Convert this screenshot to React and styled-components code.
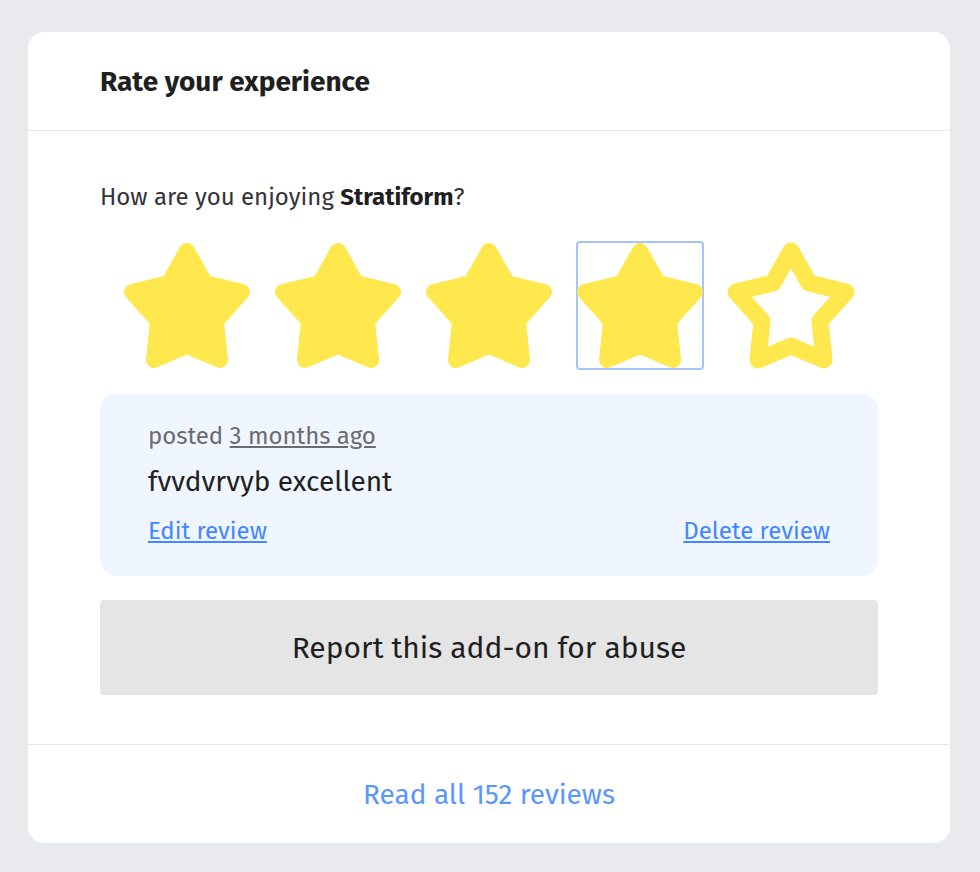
import styled, { createGlobalStyle } from "styled-components";

const GlobalStyle = createGlobalStyle`
  html, body {
    margin: 0;
    background: #e9eaee;
  }
  body {
    font-family: "Fira Sans", "Open Sans", sans-serif;
    color: #1f1f23;
  }
`

const Page = styled.div`
  padding: 32px 30px 29px 28px;
`

const Card = styled.section`
  background: #ffffff;
  border-radius: 16px;
  overflow: hidden;
`

const Header = styled.header`
  height: 98px;
  display: flex;
  align-items: center;
  padding: 0 72px;
  border-bottom: 1px solid #e8e8ea;
`

const Title = styled.h2`
  margin: 0;
  font-size: 28px;
  font-weight: 700;
  color: #1f1f23;
`

const Body = styled.div`
  padding: 50px 72px 49px;
  border-bottom: 1px solid #e8e8ea;
`

const Question = styled.p`
  margin: 0;
  font-size: 24px;
  line-height: 32px;
  color: #333338;

  strong {
    font-weight: 700;
    color: #1f1f23;
  }
`

const Stars = styled.div`
  display: flex;
  justify-content: center;
  gap: 23px;
  margin-top: 28px;
`

const StarButton = styled.button`
  box-sizing: border-box;
  width: 128px;
  height: 129px;
  padding: 0;
  border: 2px solid ${p => (p.$focused ? "#a6c4fa" : "transparent")};
  border-radius: 4px;
  background: none;
  cursor: pointer;

  svg {
    display: block;
    margin: -2px;
    width: 128px;
    height: 129px;
    overflow: visible;
  }
`

const ReviewBox = styled.div`
  margin-top: 24px;
  background: #f0f6ff;
  border-radius: 16px;
  padding: 28px 48px 31px;
`

const Posted = styled.div`
  font-size: 24px;
  line-height: 28px;
  color: #6b6b70;

  a {
    color: #6b6b70;
    text-decoration: underline;
  }
`

const Comment = styled.p`
  margin: 16px 0 19px;
  font-size: 28px;
  line-height: 32px;
  color: #1f1f23;
`

const Actions = styled.div`
  display: flex;
  justify-content: space-between;
  font-size: 24px;
  line-height: 28px;
`

const TextLink = styled.a`
  color: ${p => p.$color || "#4287ff"};
  text-decoration: ${p => (p.$plain ? "none" : "underline")};
  cursor: pointer;
`

const ReportButton = styled.button`
  display: block;
  width: 100%;
  height: 95px;
  margin-top: 24px;
  border: none;
  border-radius: 4px;
  background: #e5e5e5;
  font-family: inherit;
  font-size: 30px;
  color: #1f1f23;
  cursor: pointer;
`

const Footer = styled.footer`
  height: 98px;
  display: flex;
  align-items: center;
  justify-content: center;
  font-size: 28px;
`

const STAR_POINTS =
  "64,10 82,42 119,51 93,80 97,119 64,105 31,119 35,80 9,51 46,42"

const Star = ({ filled }) => (
  <svg viewBox="0 0 128 129">
    <polygon
      points={STAR_POINTS}
      fill={filled ? "#fee84e" : "none"}
      stroke="#fee84e"
      strokeWidth={filled ? 16 : 17}
      strokeLinejoin="round"
    />
  </svg>
)

const RatingCard = () => {
  const rating = 4

  return (
    <Card>
      <Header>
        <Title>Rate your experience</Title>
      </Header>
      <Body>
        <Question>How are you enjoying <strong>Stratiform</strong>?</Question>
        <Stars>
          {[1, 2, 3, 4, 5].map(n => (
            <StarButton key={n} $focused={n === rating} aria-label={`Rate ${n} out of 5`}>
              <Star filled={n <= rating}/>
            </StarButton>
          ))}
        </Stars>
        <ReviewBox>
          <Posted>posted <a>3 months ago</a></Posted>
          <Comment>fvvdvrvyb excellent</Comment>
          <Actions>
            <TextLink>Edit review</TextLink>
            <TextLink>Delete review</TextLink>
          </Actions>
        </ReviewBox>
        <ReportButton>Report this add-on for abuse</ReportButton>
      </Body>
      <Footer>
        <TextLink $plain $color="#5b96ff">Read all 152 reviews</TextLink>
      </Footer>
    </Card>
  )
}

const App = () => (
  <Page>
    <GlobalStyle/>
    <RatingCard/>
  </Page>
)

export default App
